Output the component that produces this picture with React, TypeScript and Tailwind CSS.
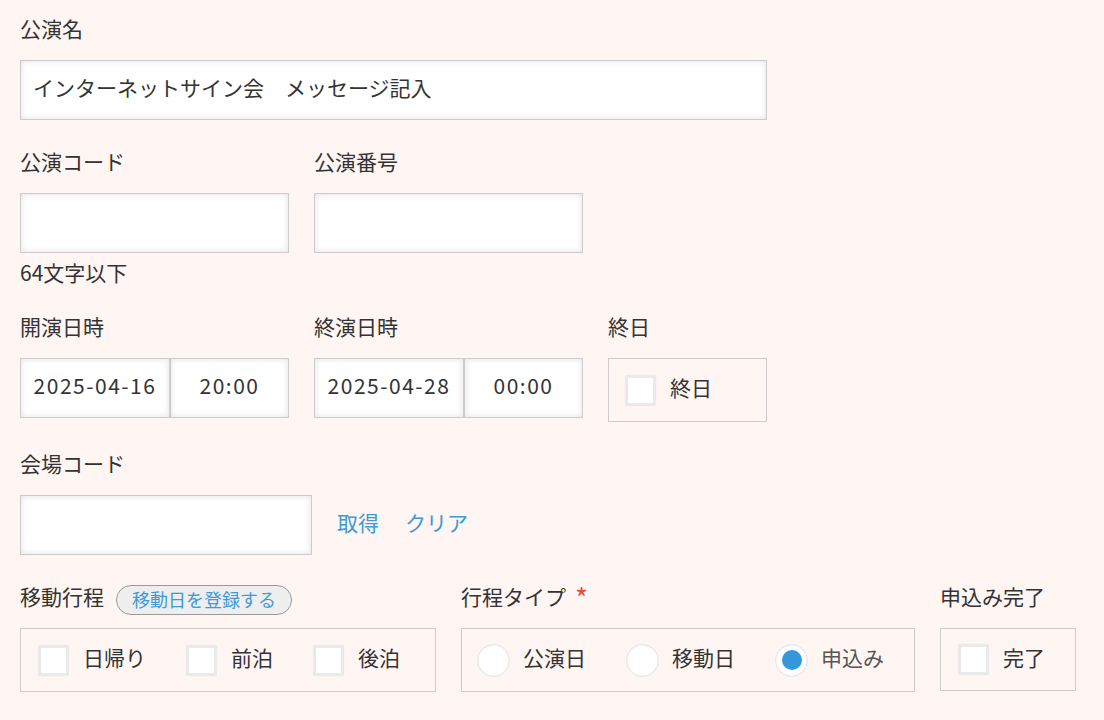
import React from "react";

const font = { fontFamily: '"Noto Sans CJK JP", "Noto Sans", sans-serif' };

function Label({ children }: { children: React.ReactNode }) {
  return (
    <div className="h-[30px] mb-[14px] text-[#333] text-[21px] whitespace-nowrap flex items-center">
      <span className="-translate-y-[2px]">{children}</span>
    </div>
  );
}

function Input({ w, value, center }: { w: string; value?: string; center?: boolean }) {
  return (
    <div
      className={`${w} h-[60px] bg-white border border-[#cccccc] shadow-[inset_0_0_6px_rgba(0,0,0,0.12)] flex items-center text-[21px] text-[#333] whitespace-nowrap ${center ? "justify-center tracking-[1.5px]" : "pl-[12px]"}`}
    >
      <span className="-translate-y-[2px]">{value}</span>
    </div>
  );
}

function Check({ label }: { label: string }) {
  return (
    <div className="flex items-center">
      <div className="w-[31px] h-[31px] bg-white border-[3px] border-[#e9eaea] rounded-[2px] shadow-[0_0_1px_rgba(0,0,0,0.08)]" />
      <span className="ml-[14px] text-[21px] text-[#333] -translate-y-[2px]">{label}</span>
    </div>
  );
}

function Radio({ label, checked }: { label: string; checked?: boolean }) {
  return (
    <div className="flex items-center">
      <div className="w-[33px] h-[33px] rounded-full bg-white border border-[#e2e2e2] shadow-[inset_0_0_3px_rgba(0,0,0,0.05)] flex items-center justify-center">
        {checked && <div className="w-[20px] h-[20px] rounded-full bg-[#3498db]" />}
      </div>
      <span className={`ml-[13px] text-[21px] -translate-y-[2px] ${checked ? "text-[#555]" : "text-[#333]"}`}>{label}</span>
    </div>
  );
}

export default function App() {
  return (
    <div className="w-[1104px] h-[720px] bg-[#fff5f3] overflow-hidden pl-[20px] pt-[16px]" style={font}>
      <div className="flex flex-col gap-[29px]">
        {/* 公演名 */}
        <div>
          <Label>公演名</Label>
          <Input w="w-[747px]" value="インターネットサイン会　メッセージ記入" />
        </div>

        {/* 公演コード / 番号 */}
        <div>
          <div className="flex gap-[25px]">
            <div>
              <Label>公演コード</Label>
              <Input w="w-[269px]" />
            </div>
            <div>
              <Label>公演番号</Label>
              <Input w="w-[269px]" />
            </div>
          </div>
          <div className="h-[24px] leading-[24px] mt-[8px] text-[21px] text-[#333]">
            <span className="relative -top-[1px]">64文字以下</span>
          </div>
        </div>

        {/* 日時 */}
        <div className="flex gap-[25px]">
          <div>
            <Label>開演日時</Label>
            <div className="flex">
              <Input w="w-[150px]" value="2025-04-16" center />
              <Input w="w-[119px]" value="20:00" center />
            </div>
          </div>
          <div>
            <Label>終演日時</Label>
            <div className="flex">
              <Input w="w-[150px]" value="2025-04-28" center />
              <Input w="w-[119px]" value="00:00" center />
            </div>
          </div>
          <div>
            <Label>終日</Label>
            <div className="w-[159px] h-[64px] border border-[#cccccc] flex items-center pl-[16px]">
              <Check label="終日" />
            </div>
          </div>
        </div>

        {/* 会場コード */}
        <div>
          <Label>会場コード</Label>
          <div className="flex items-center">
            <Input w="w-[292px]" />
            <span className="ml-[25px] text-[21px] text-[#3d9ad8] -translate-y-[2px]">取得</span>
            <span className="ml-[26px] text-[21px] text-[#3d9ad8] -translate-y-[2px]">クリア</span>
          </div>
        </div>

        {/* 行程 */}
        <div className="flex gap-[25px]">
          <div>
            <div className="h-[30px] mb-[14px] flex items-center">
              <span className="text-[21px] text-[#333] -translate-y-[2px]">移動行程</span>
              <span className="ml-[12px] h-[30px] px-[15px] rounded-full border border-[#999] bg-[#eeeeee] text-[#3d9ad8] text-[18px] leading-[26px] relative top-[1px]">
                移動日を登録する
              </span>
            </div>
            <div className="w-[416px] h-[64px] border border-[#cccccc] flex items-center pl-[17px] gap-[40px]">
              <Check label="日帰り" />
              <Check label="前泊" />
              <Check label="後泊" />
            </div>
          </div>
          <div>
            <div className="h-[30px] mb-[14px] flex items-center">
              <span className="text-[21px] text-[#333] -translate-y-[2px]">行程タイプ</span>
              <span className="ml-[9px] text-[28px] leading-none text-[#e74c3c] relative -top-[2px]">*</span>
            </div>
            <div className="w-[454px] h-[64px] border border-[#cccccc] flex items-center pl-[15px] gap-[40px]">
              <Radio label="公演日" />
              <Radio label="移動日" />
              <Radio label="申込み" checked />
            </div>
          </div>
          <div>
            <Label>申込み完了</Label>
            <div className="w-[136px] h-[63px] border border-[#cccccc] flex items-center pl-[17px]">
              <Check label="完了" />
            </div>
          </div>
        </div>
      </div>
    </div>
  );
}
